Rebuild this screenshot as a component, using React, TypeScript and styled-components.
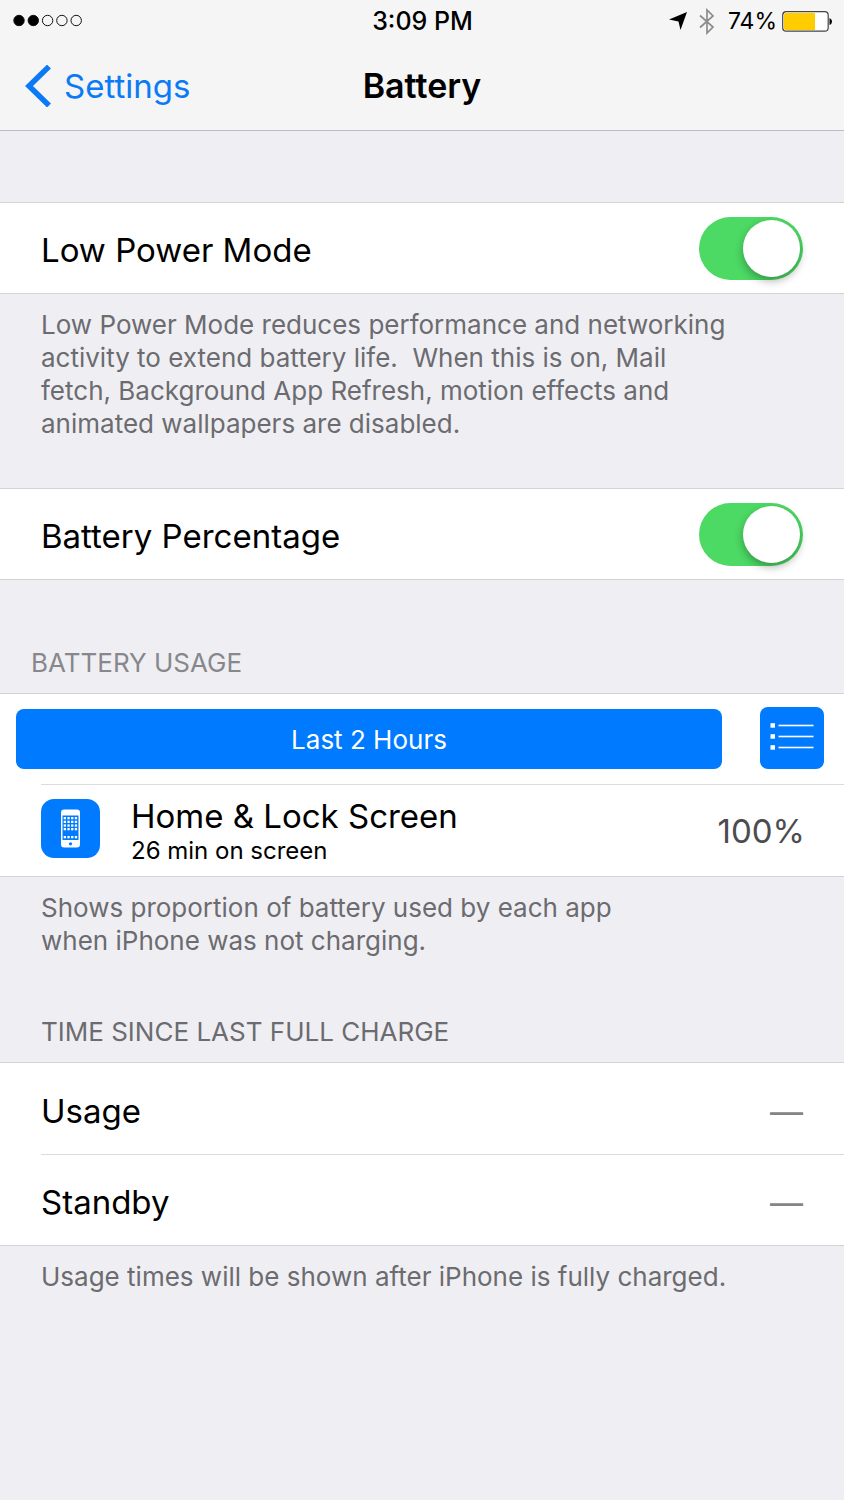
import React, { useState } from "react";
import styled, { createGlobalStyle } from "styled-components";

const GlobalStyle = createGlobalStyle`
  *, *::before, *::after { box-sizing: border-box; }
  body {
    margin: 0;
    background: #efeff3;
    color: #000;
    font-family: Inter, "Liberation Sans", sans-serif;
  }
  button, input { font: inherit; }
`;

const Page = styled.div`
  min-height: 100vh;
  background: #efeff3;
`;

const TopBar = styled.header`
  background: #f5f5f6;
  border-bottom: 1px solid #bebec2;
`;

const StatusBar = styled.div`
  display: grid;
  grid-template-columns: 1fr auto 1fr;
  align-items: center;
  height: 42px;
  padding: 0 12px 0 13px;
  font-size: 23px;
`;

const Clock = styled.span`
  font-size: 25px;
  font-weight: 500;
`;

const StatusIcons = styled.div`
  display: flex;
  justify-content: flex-end;
  align-items: center;
`;

const BluetoothIcon = styled.svg`
  margin: 0 13px 0 12px;
`;

const BatteryIcon = styled.svg`
  margin-left: 5px;
`;

const NavBar = styled.nav`
  display: grid;
  grid-template-columns: 1fr auto 1fr;
  align-items: center;
  height: 88px;
  padding: 0 24px;
`;

const BackLink = styled.a`
  display: flex;
  align-items: center;
  gap: 12px;
  color: #0b7af5;
  font-size: 33px;
  line-height: 40px;
  text-decoration: none;
`;

const Title = styled.h1`
  margin: 0;
  font-size: 34px;
  line-height: 40px;
  font-weight: 600;
`;

const Content = styled.main`
  padding-top: 71px;
`;

const Group = styled.div`
  background: #fff;
  border-top: 1px solid #d3d3d7;
  border-bottom: 1px solid #d3d3d7;
`;

const Row = styled.div`
  display: flex;
  align-items: center;
  justify-content: space-between;
  height: 91px;
  margin-left: 41px;
  padding-right: 41px;
  font-size: 33px;
  line-height: 40px;

  & + & { border-top: 1px solid #dcdce0; }
`;

const SwitchRow = styled(Row).attrs({ as: "label" })`
  height: 90px;
`;

const RowLabel = styled.span`
  padding-top: 4px;
`;

const Switch = styled.input`
  appearance: none;
  display: flex;
  align-items: center;
  width: 104px;
  height: 63px;
  margin: 0;
  padding: 0 3px;
  border-radius: 32px;
  background: #d9d9dd;

  &::before {
    content: "";
    width: 57px;
    height: 57px;
    border-radius: 50%;
    background: #fff;
    box-shadow: 0 4px 8px rgba(0, 0, 0, 0.3);
  }

  &:checked {
    justify-content: flex-end;
    background: #4cd964;
  }
`;

const Footnote = styled.p<{ $bottom?: number }>`
  margin: 0;
  padding: 14px 41px ${({ $bottom = 0 }) => $bottom}px;
  color: #6b6b70;
  font-size: 26px;
  line-height: 33px;
`;

const SectionTitle = styled.h2<{ $indent: number; $top: number; $color: string }>`
  margin: 0;
  padding: ${({ $top }) => $top}px ${({ $indent }) => $indent}px 14px;
  color: ${({ $color }) => $color};
  font-size: 26px;
  line-height: 32px;
  font-weight: 400;
`;

const UsageControls = styled.div`
  display: flex;
  align-items: flex-end;
  gap: 38px;
  height: 90px;
  padding: 0 20px 15px 16px;
`;

const PeriodButton = styled.button`
  flex: 1;
  height: 60px;
  padding: 0;
  border: 0;
  border-radius: 8px;
  background: #007aff;
  color: #fff;
  font-size: 26px;
`;

const ListButton = styled.button`
  width: 64px;
  height: 62px;
  padding: 0;
  border: 0;
  border-radius: 8px;
  background: #007aff;

  svg { display: block; }
`;

const AppRow = styled.div`
  display: flex;
  align-items: center;
  height: 92px;
  margin-left: 41px;
  padding-right: 39px;
  border-top: 1px solid #dcdce0;
`;

const AppIcon = styled.svg`
  margin-bottom: 4px;
`;

const AppText = styled.div`
  flex: 1;
  margin-left: 31px;
  padding-top: 2px;
`;

const AppName = styled.div`
  font-size: 33px;
  line-height: 38px;
`;

const AppDetail = styled.div`
  font-size: 24px;
  line-height: 32px;
`;

const Percent = styled.span`
  color: #4c4c50;
  font-size: 33px;
  line-height: 40px;
`;

const Value = styled.span`
  padding-top: 6px;
  color: #858588;
`;

function SignalDots() {
  return (
    <svg width="70" height="14" viewBox="0 0 70 14" aria-label="Signal strength">
      {[0, 1, 2, 3, 4].map((i) => (
        <circle
          key={i}
          cx={6 + i * 14.3}
          cy="6.500"
          r="5.200"
          fill={i < 2 ? "#000" : "none"}
          stroke="#111"
          strokeWidth="1"
        />
      ))}
    </svg>
  );
}

function PhoneAppIcon() {
  return (
    <AppIcon width="59" height="59" viewBox="0 0 59 59" aria-hidden="true">
      <rect width="59" height="59" rx="13" fill="#007aff" />
      <rect x="20" y="10.500" width="19" height="38" rx="3" fill="#fff" />
      <rect x="21.500" y="16.500" width="16" height="24.500" fill="#007aff" />
      {[18, 21.7, 25.4, 29, 37].map((y) =>
        [22.7, 26.4, 30.1, 33.8].map((x) => (
          <rect key={`${x}-${y}`} x={x} y={y} width="2.300" height="2.300" fill="#fff" />
        ))
      )}
      <circle cx="29.500" cy="44.800" r="1.600" fill="#007aff" />
    </AppIcon>
  );
}

export default function App() {
  const [lowPower, setLowPower] = useState(true);
  const [percentage, setPercentage] = useState(true);

  return (
    <Page>
      <GlobalStyle />
      <TopBar>
        <StatusBar>
          <SignalDots />
          <Clock>3:09 PM</Clock>
          <StatusIcons>
            <svg width="18" height="18" viewBox="0 0 18 18" aria-hidden="true">
              <path d="M18 0 L11.500 18 L9.500 9.500 L0 7.500 Z" fill="#000" />
            </svg>
            <BluetoothIcon width="16" height="27" viewBox="0 0 16 27" aria-hidden="true">
              <path
                d="M1 7.500 L14 19 L8 25 V2 L14 8 L1 19.500"
                fill="none"
                stroke="#8c8c8e"
                strokeWidth="1.700"
              />
            </BluetoothIcon>
            <span>74%</span>
            <BatteryIcon width="50" height="21" viewBox="0 0 50 21" aria-hidden="true">
              <rect x="0.700" y="0.700" width="45.500" height="19.500" rx="3.500" fill="#fff" stroke="#444" strokeWidth="1.200" />
              <path d="M4 2 H33 V19 H4 Q2 19 2 17 V4 Q2 2 4 2 Z" fill="#fc0" />
              <path d="M47.500 7 Q50 8 50 10.500 Q50 13 47.500 14 Z" fill="#000" />
            </BatteryIcon>
          </StatusIcons>
        </StatusBar>
        <NavBar>
          <BackLink href="#settings">
            <svg width="28" height="42" viewBox="0 0 28 42" aria-hidden="true">
              <path d="M25 1.500 L5 21 L25 40.500" fill="none" stroke="#0b7af5" strokeWidth="5.500" />
            </svg>
            Settings
          </BackLink>
          <Title>Battery</Title>
        </NavBar>
      </TopBar>

      <Content>
        <Group>
          <SwitchRow>
            <RowLabel>Low Power Mode</RowLabel>
            <Switch type="checkbox" role="switch" checked={lowPower} onChange={(e) => setLowPower(e.target.checked)} />
          </SwitchRow>
        </Group>
        <Footnote $bottom={48}>
          Low Power Mode reduces performance and networking
          <br />
          activity to extend battery life.&nbsp; When this is on, Mail
          <br />
          fetch, Background App Refresh, motion effects and
          <br />
          animated wallpapers are disabled.
        </Footnote>

        <Group>
          <SwitchRow>
            <RowLabel>Battery Percentage</RowLabel>
            <Switch type="checkbox" role="switch" checked={percentage} onChange={(e) => setPercentage(e.target.checked)} />
          </SwitchRow>
        </Group>

        <SectionTitle $indent={31} $top={67} $color="#87878c">BATTERY USAGE</SectionTitle>
        <Group>
          <UsageControls>
            <PeriodButton type="button">Last 2 Hours</PeriodButton>
            <ListButton type="button" aria-label="Show details">
              <svg width="64" height="62" viewBox="0 0 64 62" aria-hidden="true">
                {[18.5, 29.5, 40.5].map((y) => (
                  <g key={y} fill="#fff">
                    <rect x="10.500" y={y - 2.3} width="4.500" height="4.500" />
                    <rect x="18.500" y={y - 0.8} width="35" height="1.600" />
                  </g>
                ))}
              </svg>
            </ListButton>
          </UsageControls>
          <AppRow>
            <PhoneAppIcon />
            <AppText>
              <AppName>Home &amp; Lock Screen</AppName>
              <AppDetail>26 min on screen</AppDetail>
            </AppText>
            <Percent>100%</Percent>
          </AppRow>
        </Group>
        <Footnote $bottom={59}>
          Shows proportion of battery used by each app
          <br />
          when iPhone was not charging.
        </Footnote>

        <SectionTitle $indent={41} $top={0} $color="#6b6b70">TIME SINCE LAST FULL CHARGE</SectionTitle>
        <Group>
          <Row>
            <RowLabel>Usage</RowLabel>
            <Value>—</Value>
          </Row>
          <Row>
            <RowLabel>Standby</RowLabel>
            <Value>—</Value>
          </Row>
        </Group>
        <Footnote>Usage times will be shown after iPhone is fully charged.</Footnote>
      </Content>
    </Page>
  );
}
